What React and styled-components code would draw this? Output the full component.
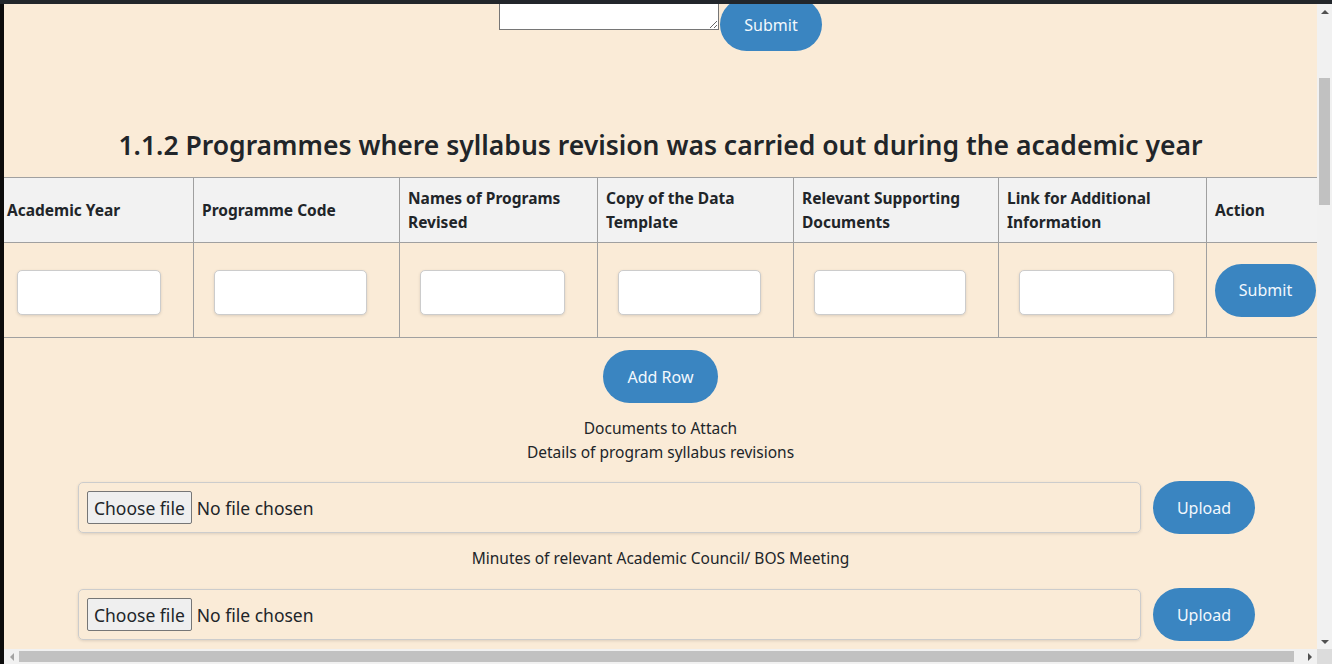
import styled, { createGlobalStyle } from "styled-components";

const FONT = `"Noto Sans", "Open Sans", sans-serif`;

const GlobalStyle = createGlobalStyle`
  html, body {
    margin: 0;
    padding: 0;
    background: #0c0c0c;
  }
  * {
    box-sizing: border-box;
  }
`;

const Screen = styled.div`
  width: 1332px;
  height: 664px;
  display: flex;
  flex-direction: column;
  background: #0c0c0c;
  overflow: hidden;
`;

const TopBar = styled.div`
  flex: none;
  height: 4px;
  background: #22262b;
`;

const Window = styled.div`
  flex: 1;
  display: flex;
  min-height: 0;
`;

const LeftEdge = styled.div`
  flex: none;
  width: 4px;
  background: #0c0c0c;
`;

const Browser = styled.div`
  flex: 1;
  min-width: 0;
  display: grid;
  grid-template-columns: 1fr 15px;
  grid-template-rows: 1fr 15px;
`;

const Viewport = styled.main`
  overflow: hidden;
  background: #faebd7;
  font-family: ${FONT};
  font-size: 15.5px;
  line-height: 24px;
  color: #212529;
`;

/* scrollbars */
const VTrack = styled.div`
  background: #f1f1f1;
  display: flex;
  flex-direction: column;
  align-items: center;
`;

const HTrack = styled.div`
  background: #f1f1f1;
  display: flex;
  align-items: center;
`;

const Corner = styled.div`
  background: #dcdcdc;
`;

const ArrowBox = styled.div`
  flex: none;
  width: 15px;
  height: 15px;
  display: flex;
  align-items: center;
  justify-content: center;
`;

const Triangle = styled.span`
  width: 0;
  height: 0;
  border: 4px solid transparent;
  ${({ $dir }) =>
    $dir === "up"
      ? "border-bottom-color: #505050; border-top-width: 0;"
      : $dir === "down"
      ? "border-top-color: #505050; border-bottom-width: 0;"
      : $dir === "left"
      ? "border-right-color: #a3a3a3; border-left-width: 0;"
      : "border-left-color: #505050; border-right-width: 0;"}
`;

const VThumb = styled.div`
  width: 11px;
  height: 127px;
  margin-top: 59px;
  background: #c1c1c1;
`;

const HThumb = styled.div`
  width: 1275px;
  height: 11px;
  background: #c1c1c1;
`;

const Spacer = styled.div`
  flex: 1;
`;

/* page content */
const TopForm = styled.div`
  display: flex;
  justify-content: center;
  align-items: flex-end;
  margin-top: -34px;
`;

const TextArea = styled.textarea`
  width: 220px;
  height: 60px;
  margin: 0 1px 21px 0;
  border: 1px solid #767676;
  background: #fff;
`;

const PillButton = styled.button`
  flex: none;
  width: ${({ $w }) => $w}px;
  height: 53px;
  padding: 0;
  border: none;
  border-radius: 27px;
  background: #3a85c1;
  color: #f2f8fd;
  font-family: ${FONT};
  font-size: 16px;
  cursor: pointer;
`;

const Heading = styled.h2`
  margin: 77px 0 15px;
  font-size: 26.5px;
  line-height: 34px;
  font-weight: 600;
  text-align: center;
`;

const Table = styled.table`
  width: 1334px;
  margin-left: -8px;
  border-collapse: collapse;
  table-layout: fixed;
`;

const Th = styled.th`
  padding: 8px 8px 8px ${({ $first }) => ($first ? 10 : 8)}px;
  border: 1px solid #a0a0a0;
  background: #f2f2f2;
  text-align: left;
  vertical-align: middle;
  font-weight: 700;
  font-size: 15.5px;
  line-height: 24px;
`;

const Td = styled.td`
  height: 95px;
  padding: 8px;
  border: 1px solid #a0a0a0;
  vertical-align: middle;
`;

const CellInput = styled.input`
  display: block;
  width: calc(100% - 36px);
  height: 45px;
  margin: 5px 0 0 12px;
  border: 1px solid #ccc;
  border-radius: 5px;
  background: #fff;
  box-shadow: 0 1px 3px rgba(0, 0, 0, 0.12);
`;

const Centered = styled.div`
  display: flex;
  justify-content: center;
  margin-top: ${({ $mt }) => $mt || 0}px;
`;

const Caption = styled.p`
  margin: ${({ $mt }) => $mt || 0}px 0 0;
  text-align: center;
`;

const FileRow = styled.div`
  display: flex;
  align-items: center;
  gap: 12px;
  margin-top: ${({ $mt }) => $mt}px;
  padding-left: 74px;
`;

const FileBox = styled.div`
  width: 1063px;
  height: 51px;
  display: flex;
  align-items: center;
  gap: 5px;
  padding-left: 8px;
  border: 1px solid #ccc;
  border-radius: 5px;
  box-shadow: 0 1px 3px rgba(0, 0, 0, 0.12);
  font-size: 17.5px;
`;

const ChooseButton = styled.button`
  height: 33px;
  padding: 0 6px;
  border: 1px solid #767676;
  border-radius: 2px;
  background: #efefef;
  color: #212529;
  font-family: ${FONT};
  font-size: 17.5px;
`;

const columns = [
  { w: 197, label: "Academic Year" },
  { w: 206, label: "Programme Code" },
  { w: 198, label: "Names of Programs Revised" },
  { w: 196, label: "Copy of the Data Template" },
  { w: 205, label: "Relevant Supporting Documents" },
  { w: 208, label: "Link for Additional Information" },
  { w: 124, label: "Action" },
];

const FileUpload = ({ mt }) => (
  <FileRow $mt={mt}>
    <FileBox>
      <ChooseButton type="button">Choose file</ChooseButton>
      <span>No file chosen</span>
    </FileBox>
    <PillButton $w={102}>Upload</PillButton>
  </FileRow>
);

const App = () => {
  return (
    <Screen>
      <GlobalStyle />
      <TopBar />
      <Window>
        <LeftEdge />
        <Browser>
          <Viewport>
            <TopForm>
              <TextArea />
              <PillButton $w={102}>Submit</PillButton>
            </TopForm>

            <Heading>
              1.1.2 Programmes where syllabus revision was carried out during
              the academic year
            </Heading>

            <Table>
              <colgroup>
                {columns.map((c) => (
                  <col key={c.label} style={{ width: c.w }} />
                ))}
              </colgroup>
              <thead>
                <tr>
                  {columns.map((c, i) => (
                    <Th key={c.label} $first={i === 0}>
                      {c.label}
                    </Th>
                  ))}
                </tr>
              </thead>
              <tbody>
                <tr>
                  {columns.slice(0, 6).map((c) => (
                    <Td key={c.label}>
                      <CellInput type="text" />
                    </Td>
                  ))}
                  <Td>
                    <PillButton $w={101}>Submit</PillButton>
                  </Td>
                </tr>
              </tbody>
            </Table>

            <Centered $mt={12}>
              <PillButton $w={115}>Add Row</PillButton>
            </Centered>

            <Caption $mt={13}>Documents to Attach</Caption>
            <Caption>Details of program syllabus revisions</Caption>
            <FileUpload mt={17} />
            <Caption $mt={12}>
              Minutes of relevant Academic Council/ BOS Meeting
            </Caption>
            <FileUpload mt={18} />
          </Viewport>

          <VTrack>
            <ArrowBox>
              <Triangle $dir="up" />
            </ArrowBox>
            <VThumb />
            <Spacer />
            <ArrowBox>
              <Triangle $dir="down" />
            </ArrowBox>
          </VTrack>

          <HTrack>
            <ArrowBox>
              <Triangle $dir="left" />
            </ArrowBox>
            <HThumb />
            <Spacer />
            <ArrowBox>
              <Triangle $dir="right" />
            </ArrowBox>
          </HTrack>
          <Corner />
        </Browser>
      </Window>
    </Screen>
  );
};

export default App;
